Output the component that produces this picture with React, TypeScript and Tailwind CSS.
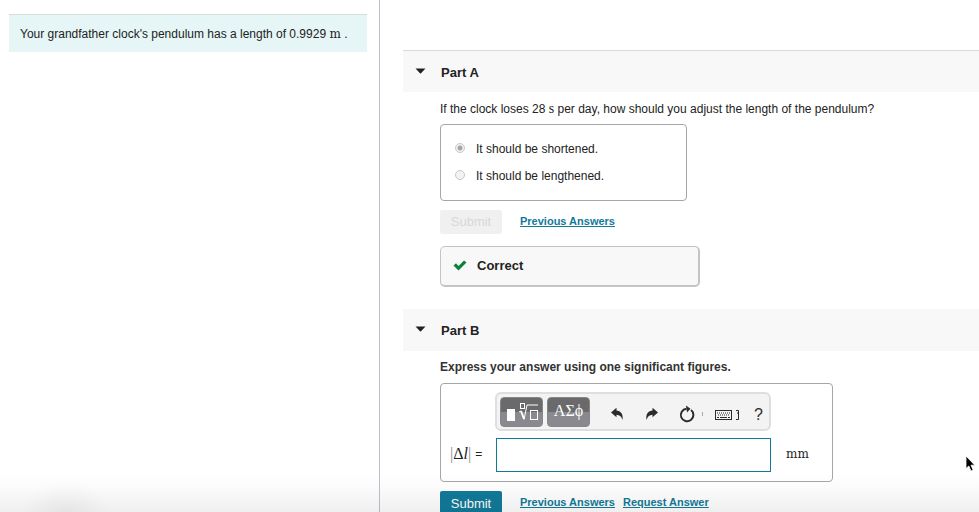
import type { ReactNode } from "react";

function Serif({ children }: { children: ReactNode }) {
  return <span className="font-['Liberation_Serif',serif] text-sm leading-none">{children}</span>;
}

function MathM({ children }: { children: ReactNode }) {
  return <span className="font-['DejaVu_Serif',serif] text-xs leading-none">{children}</span>;
}

function PartHeader({ title, className }: { title: string; className: string }) {
  return (
    <h2 className={className}>
      <button type="button" className="flex h-full w-full items-center gap-[15px] pt-0.5 pl-3 text-left text-[13px] font-bold text-[#222]">
        <svg viewBox="0 0 11 6" className="mb-1 h-1.5 w-[11px]" aria-hidden="true">
          <path d="M0.5 0.5H10.5L6 5.3Q5.5 5.8 5 5.3Z" fill="#222" />
        </svg>
        {title}
      </button>
    </h2>
  );
}

function TextLink({ children }: { children: ReactNode }) {
  return (
    <a href="#" className="pb-0.5 text-[11px] font-bold text-[#117a9a] underline">
      {children}
    </a>
  );
}

function Choice({ label, checked }: { label: string; checked: boolean }) {
  return (
    <label className="flex h-[27px] items-center gap-[11px]">
      <input
        type="radio"
        name="adjust"
        disabled
        defaultChecked={checked}
        className="mb-0.5 size-[10px] appearance-none rounded-full border border-[#c8c8c8] bg-[#f3f3f3] checked:bg-[radial-gradient(circle,#a5a5a5_0_2px,#f3f3f3_3px)]"
      />
      {label}
    </label>
  );
}

function ToolIcon({ label, className, children }: { label: string; className: string; children: ReactNode }) {
  return (
    <button type="button" aria-label={label} className={className}>
      {children}
    </button>
  );
}

function Toolbar() {
  return (
    <div className="flex h-[39px] items-center rounded-md border-2 border-[#dedede] bg-[#f3f3f3] pl-[3px] text-[#2b2b2b]">
      <button
        type="button"
        aria-label="Templates"
        className="flex h-[30px] w-[43px] items-center justify-center rounded-sm border border-[#85858a] bg-linear-to-b from-[#6a6a6d] from-50% to-[#89898f] to-50%"
      >
        <svg viewBox="0 0 34 20" className="h-5 w-[34px]" fill="none" stroke="#fff" aria-hidden="true">
          <rect x="2" y="7" width="8" height="12" fill="#fff" stroke="none" />
          <rect x="15.500" y="1.500" width="4" height="5" />
          <path d="M14 10l2-1" />
          <path d="M16 9l3 8" strokeWidth="2" />
          <path d="M19 17.500l3-14.500h11" />
          <rect x="25.500" y="8.500" width="7" height="9" />
        </svg>
      </button>
      <button
        type="button"
        className="ml-1 h-[30px] w-[43px] rounded-sm border border-[#85858a] bg-linear-to-b from-[#6a6a6d] from-50% to-[#89898f] to-50% pb-0.5 font-['Liberation_Serif',serif] text-base leading-none text-white"
      >
        ΑΣϕ
      </button>
      <ToolIcon label="Undo" className="ml-5">
        <svg viewBox="0 0 14 14" className="mt-1 size-3.5" fill="currentColor">
          <path d="M1 5.500L6.500 0.800V3.600C10.500 3.600 13.500 7 12.500 13C11.500 9.500 9.500 7.800 6.500 7.700V10.300Z" />
        </svg>
      </ToolIcon>
      <ToolIcon label="Redo" className="ml-[21px]">
        <svg viewBox="0 0 14 14" className="mt-1 size-3.5" fill="currentColor">
          <path d="M13 5.500L7.500 0.800V3.600C3.500 3.600 0.500 7 1.500 13C2.500 9.500 4.500 7.800 7.500 7.700V10.300Z" />
        </svg>
      </ToolIcon>
      <ToolIcon label="Reset" className="ml-5">
        <svg viewBox="0 0 16 18" className="mt-1 h-[18px] w-4" fill="none" stroke="currentColor" strokeWidth="2">
          <path d="M12 5A6.300 6.300 0 1 1 7.500 3.700" />
          <path d="M7 0.500L11.500 3.700L8 7.500Z" fill="currentColor" stroke="none" />
        </svg>
      </ToolIcon>
      <span className="mt-1 ml-[7px] h-1 w-px bg-[#aaa]" />
      <ToolIcon label="Keyboard shortcuts" className="ml-3">
        <svg viewBox="0 0 25 12" className="mt-1.5 h-3 w-[25px]" fill="none" stroke="currentColor">
          <rect x="0.500" y="1.500" width="16" height="9" />
          <path d="M2 4h13M3 6h12" strokeDasharray="1 1" />
          <path d="M2 8.500h2M5 8.500h7M13 8.500h2" />
          <path d="M21 1.500h2.500v9H21M22 4h2" />
        </svg>
      </ToolIcon>
      <button type="button" aria-label="Help" className="mt-1.5 ml-3.5 text-base leading-none">
        ?
      </button>
    </div>
  );
}

export default function App() {
  return (
    <div className="relative flex h-screen overflow-hidden bg-white font-['Liberation_Sans',Arial,sans-serif] text-xs text-[#222]">
      <aside className="w-[380px] shrink-0 border-r border-[#b9c3cf] pt-3.5 pr-3 pl-[9px]">
        <p className="border-t border-[#d9dcdc] bg-[#e6f6f6] px-[11px] pt-3 pb-2.5 leading-[15px]">
          Your grandfather clock's pendulum has a length of 0.9929 <MathM>m</MathM> .
        </p>
      </aside>

      <main className="min-w-0 grow pt-[50px] pl-[23px]">
        <PartHeader title="Part A" className="h-[42px] border-t border-[#d9d9d9] bg-[#f8f8f8]" />
        <section className="pl-[37px]">
          <p className="pt-2.5 pb-[7px] leading-[15px]">
            If the clock loses 28 <Serif>s</Serif> per day, how should you adjust the length of the pendulum?
          </p>
          <fieldset className="h-[77px] w-[247px] rounded border border-[#a6a6a6] pt-2.5 pl-3.5">
            <Choice label="It should be shortened." checked />
            <Choice label="It should be lengthened." checked={false} />
          </fieldset>
          <div className="mt-[9px] flex items-center gap-[18px]">
            <button type="button" disabled className="h-6 w-[62px] rounded-xs bg-[#f0f0f0] text-[13px] text-[#d8d8d8]">
              Submit
            </button>
            <TextLink>Previous Answers</TextLink>
          </div>
          <div className="mt-3 flex h-[41px] w-[260px] items-center gap-2.5 rounded-[5px] border border-r-2 border-b-2 border-[#c4c4c4] bg-[#f8f8f8] pl-3 text-[13px] font-bold">
            <svg viewBox="0 0 14 11" className="mb-0.5 h-[11px] w-3.5" aria-hidden="true">
              <path d="M0.500 5.500L3 3.300L5.500 5.900L11 0.500L13.500 2.500L5.500 10.500Z" fill="#0f8039" />
            </svg>
            Correct
          </div>
        </section>

        <PartHeader title="Part B" className="mt-[22px] h-[42px] bg-[#f8f8f8]" />
        <section className="pl-[37px]">
          <p className="pt-[9px] pb-2 leading-[15px] font-bold text-[#333]">Express your answer using one significant figures.</p>
          <div className="flex h-[99px] w-[393px] items-end rounded border border-[#a6a6a6] pb-[9px] pl-[9px]">
            <label htmlFor="answer" className="flex h-[34px] w-[45px] items-center gap-1 pb-0.5 whitespace-nowrap">
              <span className="font-['Liberation_Serif',serif] text-base leading-none">
                <span className="text-[#888]">|</span>Δ<i>l</i>
                <span className="text-[#888]">|</span>
              </span>
              =
            </label>
            <div className="flex w-[276px] flex-col gap-[7px]">
              <Toolbar />
              <input id="answer" type="text" className="ml-px h-[34px] rounded-none border border-[#117a9a] bg-white px-2 outline-none" />
            </div>
            <span className="flex h-[34px] items-center pb-0.5 pl-[15px]">
              <MathM>mm</MathM>
            </span>
          </div>
          <div className="mt-[9px] flex items-center">
            <button type="button" className="mr-[18px] h-6 w-[62px] rounded-xs bg-[#117a9a] pt-0.5 text-[13px] text-white">
              Submit
            </button>
            <span className="flex gap-2">
              <TextLink>Previous Answers</TextLink>
              <TextLink>Request Answer</TextLink>
            </span>
          </div>
        </section>
      </main>

      <div className="pointer-events-none absolute inset-x-0 bottom-0 h-10 bg-[radial-gradient(ellipse_44px_32px_at_66px_100%,#0000000c,#00000000),linear-gradient(to_bottom,#00000000,#00000004_40%,#00000010)]" />
      <svg viewBox="0 0 12 18" className="pointer-events-none absolute top-[455px] left-[965px] h-[18px] w-3" aria-hidden="true">
        <path d="M1 1V13.500L3.800 11L6 16L8.200 15L6 10.200H9.800Z" fill="#000" stroke="#fff" strokeWidth="0.800" />
      </svg>
    </div>
  );
}
